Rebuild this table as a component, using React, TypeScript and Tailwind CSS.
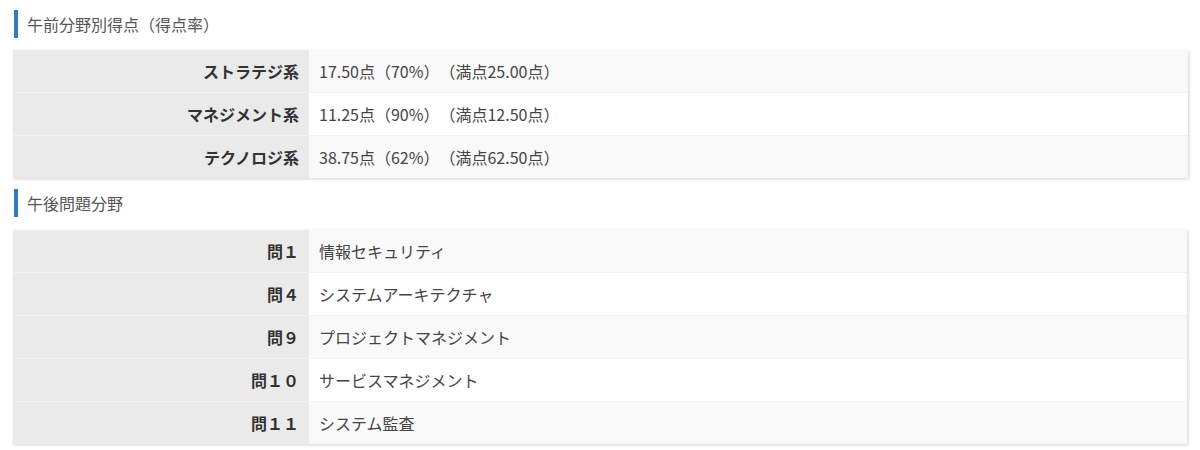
import React from 'react';

type Row = { label: string; value: string };

const morningRows: Row[] = [
  { label: 'ストラテジ系', value: '17.50点（70%）（満点25.00点）' },
  { label: 'マネジメント系', value: '11.25点（90%）（満点12.50点）' },
  { label: 'テクノロジ系', value: '38.75点（62%）（満点62.50点）' },
];

const afternoonRows: Row[] = [
  { label: '問１', value: '情報セキュリティ' },
  { label: '問４', value: 'システムアーキテクチャ' },
  { label: '問９', value: 'プロジェクトマネジメント' },
  { label: '問１０', value: 'サービスマネジメント' },
  { label: '問１１', value: 'システム監査' },
];

const SectionTitle: React.FC<{ title: string }> = ({ title }) => (
  <h2 className="flex items-center h-[28px] border-l-4 border-[#2f7bc4] pl-[9px] ml-px text-[16px] font-normal text-[#555]">
    {title}
  </h2>
);

const ScoreTable: React.FC<{ rows: Row[] }> = ({ rows }) => (
  <table className="w-full border-collapse shadow-[1px_1px_3px_rgba(0,0,0,0.18)]">
    <tbody>
      {rows.map((row, i) => (
        <tr key={row.label} className={i > 0 ? 'border-t border-[#f2f2f2]' : ''}>
          <th className="w-[296px] bg-[#eaeaea] py-[9px] pr-[10px] text-right text-[16px] leading-[24px] font-bold text-[#333]">
            {row.label}
          </th>
          <td
            className={
              'py-[9px] pl-[10px] text-[16px] leading-[24px] text-[#444] ' +
              (i % 2 === 0 ? 'bg-[#f9f9f9]' : 'bg-white')
            }
          >
            {row.value}
          </td>
        </tr>
      ))}
    </tbody>
  </table>
);

export default function App() {
  return (
    <div
      className="w-[1200px] h-[450px] bg-white px-[13px] pt-[10px] [text-spacing-trim:space-all]"
      style={{ fontFamily: '"Noto Sans CJK JP", "Noto Sans", sans-serif' }}
    >
      <SectionTitle title="午前分野別得点（得点率）" />
      <div className="mt-[12px] mr-[-1px]">
        <ScoreTable rows={morningRows} />
      </div>
      <div className="mt-[11px]">
        <SectionTitle title="午後問題分野" />
      </div>
      <div className="mt-[13px]">
        <ScoreTable rows={afternoonRows} />
      </div>
    </div>
  );
}
